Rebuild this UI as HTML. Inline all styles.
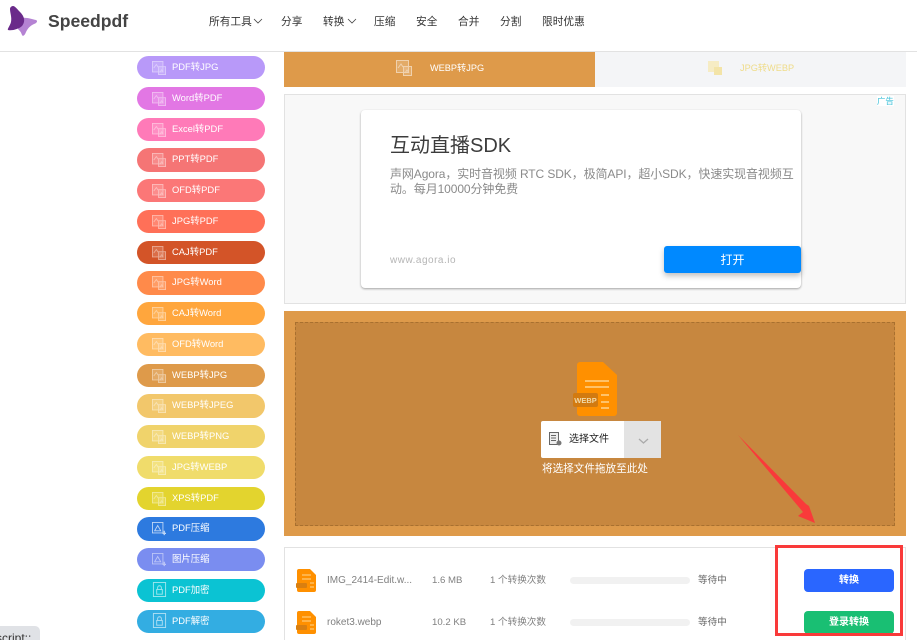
<!DOCTYPE html>
<html><head><meta charset="utf-8">
<style>
*{box-sizing:border-box}
html{margin:0;padding:0;width:917px;height:640px;overflow:hidden;background:#fff}
body{margin:0;padding:0;width:917px;height:640px;overflow:hidden;position:relative;background:#fff;font-family:"Liberation Sans","Noto Sans CJK SC",sans-serif}
.a{position:absolute;white-space:nowrap}
.nav{top:15px;font-size:10.7px;line-height:14px;color:#333}
.p{position:absolute;left:137px;width:128px;height:23px;border-radius:12px;color:#fff;font-size:9.4px;line-height:22px;padding-left:35px}
.p svg{position:absolute;left:15px;top:5px;opacity:.5}
.t{font-size:9.6px;color:#808080;line-height:14px;position:absolute;white-space:nowrap}
.n{font-size:10px}
</style></head><body>
<svg class="a" style="left:7px;top:6px" width="31" height="31" viewBox="0 0 31 31">
<path d="M14 12C19 11 25 13 29 14 31 15 30 17 27 18 23 20 21 22 19 26 18 29 16 31 15 29 14 26 13 25 11 23Z" fill="#b583d3"/>
<path d="M6 0C8 0 10 3 13 6 17 10 19 15 15 20 12 23 5 25 1 24 0 23 3 20 4 16 5 11 3 7 3 3 3 1 5 0 6 0Z" fill="#6a2a8a"/>
</svg>
<div class="a" style="left:48px;top:10px;font-size:17.6px;line-height:22px;font-weight:bold;color:#444">Speedpdf</div>
<div class="a nav" style="left:209px">所有工具</div>
<svg class="a" style="left:253px;top:18px" width="10" height="6"><path d="M1 1l4 4 4-4" fill="none" stroke="#444" stroke-width=".8"/></svg>
<div class="a nav" style="left:281px">分享</div>
<div class="a nav" style="left:323px">转换</div>
<svg class="a" style="left:347px;top:18px" width="10" height="6"><path d="M1 1l4 4 4-4" fill="none" stroke="#444" stroke-width=".8"/></svg>
<div class="a nav" style="left:374px">压缩</div>
<div class="a nav" style="left:416px">安全</div>
<div class="a nav" style="left:458px">合并</div>
<div class="a nav" style="left:500px">分割</div>
<div class="a nav" style="left:542px">限时优惠</div>
<div class="a" style="left:0;top:51px;width:917px;height:1px;background:#e2e2e2"></div>

<svg width="0" height="0" style="position:absolute"><defs>
<g id="ic" fill="rgba(255,255,255,.3)" stroke="#fff" stroke-width="1"><rect x=".5" y=".5" width="12" height="12"/><rect x="7.500" y="6.500" width="8" height="9"/><path d="M2 8l3-4 2 3" fill="none"/><path d="M9 13l2-3 2 3" fill="none"/></g>
<g id="ic2" fill="none" stroke="#fff" stroke-width="1"><rect x=".5" y=".5" width="12" height="12"/><path d="M3 10l3.500-6 3.500 6z"/><path d="M14 10v5M12 13h4" stroke-width="1.500"/></g>
<g id="ic3" fill="none" stroke="#fff" stroke-width="1"><rect x="1.500" y=".5" width="13" height="15"/><rect x="5" y="8" width="6" height="5"/><path d="M6 8V6a2 2 0 0 1 4 0v2"/></g>
</defs></svg>
<div class="p" style="top:56px;background:#b899f9"><svg width="14" height="14" viewBox="0 0 16 16"><use href="#ic"/></svg>PDF转JPG</div>
<div class="p" style="top:87px;background:#e277e4"><svg width="14" height="14" viewBox="0 0 16 16"><use href="#ic"/></svg>Word转PDF</div>
<div class="p" style="top:118px;background:#ff7ab8"><svg width="14" height="14" viewBox="0 0 16 16"><use href="#ic"/></svg>Excel转PDF</div>
<div class="p" style="top:148px;height:24px;background:#f57575"><svg width="14" height="14" viewBox="0 0 16 16"><use href="#ic"/></svg>PPT转PDF</div>
<div class="p" style="top:179px;background:#fb7777"><svg width="14" height="14" viewBox="0 0 16 16"><use href="#ic"/></svg>OFD转PDF</div>
<div class="p" style="top:210px;background:#ff7058"><svg width="14" height="14" viewBox="0 0 16 16"><use href="#ic"/></svg>JPG转PDF</div>
<div class="p" style="top:241px;background:#d35428"><svg width="14" height="14" viewBox="0 0 16 16"><use href="#ic"/></svg>CAJ转PDF</div>
<div class="p" style="top:271px;height:24px;background:#ff8a4a"><svg width="14" height="14" viewBox="0 0 16 16"><use href="#ic"/></svg>JPG转Word</div>
<div class="p" style="top:302px;background:#ffa63d"><svg width="14" height="14" viewBox="0 0 16 16"><use href="#ic"/></svg>CAJ转Word</div>
<div class="p" style="top:333px;background:#ffbb61"><svg width="14" height="14" viewBox="0 0 16 16"><use href="#ic"/></svg>OFD转Word</div>
<div class="p" style="top:364px;background:#de9a4a"><svg width="14" height="14" viewBox="0 0 16 16"><use href="#ic"/></svg>WEBP转JPG</div>
<div class="p" style="top:394px;height:24px;background:#f2c76b"><svg width="14" height="14" viewBox="0 0 16 16"><use href="#ic"/></svg>WEBP转JPEG</div>
<div class="p" style="top:425px;background:#f0d36b"><svg width="14" height="14" viewBox="0 0 16 16"><use href="#ic"/></svg>WEBP转PNG</div>
<div class="p" style="top:456px;background:#f0dc6b"><svg width="14" height="14" viewBox="0 0 16 16"><use href="#ic"/></svg>JPG转WEBP</div>
<div class="p" style="top:487px;background:#e3d42e"><svg width="14" height="14" viewBox="0 0 16 16"><use href="#ic"/></svg>XPS转PDF</div>
<div class="p" style="top:517px;height:24px;background:#2d7adf"><svg style="opacity:.7" width="14" height="14" viewBox="0 0 16 16"><use href="#ic2"/></svg>PDF压缩</div>
<div class="p" style="top:548px;background:#7a8df0"><svg width="14" height="14" viewBox="0 0 16 16"><use href="#ic2"/></svg>图片压缩</div>
<div class="p" style="top:579px;background:#0bc3d3"><svg style="top:3px;opacity:.6" width="15" height="15" viewBox="0 0 16 16"><use href="#ic3"/></svg>PDF加密</div>
<div class="p" style="top:610px;background:#33ade2"><svg style="top:3px;opacity:.6" width="15" height="15" viewBox="0 0 16 16"><use href="#ic3"/></svg>PDF解密</div>

<div class="a" style="left:-10px;top:626px;width:50px;height:20px;background:#e0e2e6;border-radius:5px;font-size:12px;line-height:24px;color:#333;padding-left:6px">script::</div>

<div class="a" style="left:284px;top:52px;width:311px;height:35px;background:#de9a4a"></div>
<svg class="a" style="left:396px;top:60px;opacity:.55" width="16" height="16" viewBox="0 0 16 16"><use href="#ic"/></svg>
<div class="a" style="left:430px;top:61px;font-size:9.2px;line-height:14px;color:#fff">WEBP转JPG</div>
<div class="a" style="left:595px;top:52px;width:311px;height:35px;background:#f4f5f7"></div>
<svg class="a" style="left:708px;top:61px" width="14" height="14"><rect x="0" y="0" width="11" height="11" fill="#f6ecc4"/><rect x="6" y="6" width="8" height="8" fill="#f3e4a8"/></svg>
<div class="a" style="left:740px;top:61px;font-size:9.2px;line-height:14px;color:#efdc8a">JPG转WEBP</div>

<div class="a" style="left:284px;top:94px;width:622px;height:210px;background:#f8f8f8;border:1px solid #e2e2e2"></div>
<div class="a" style="left:877px;top:96px;width:17px;height:10px;background:#fff;font-size:8.4px;line-height:10px;color:#3fc0d8">广告</div>
<div class="a" style="left:361px;top:110px;width:440px;height:178px;background:#fff;border-radius:4px;box-shadow:0 1px 2px rgba(0,0,0,.35)"></div>
<div class="a" style="left:390px;top:133px;font-size:20px;line-height:26px;color:#3c3c3c">互动直播SDK</div>
<div class="a" style="left:390px;top:167px;font-size:12px;line-height:15px;color:#8a8a8a;letter-spacing:-.1px">声网Agora，实时音视频 RTC SDK，极简API，超小SDK，快速实现音视频互</div>
<div class="a" style="left:390px;top:182px;font-size:12px;line-height:15px;color:#8a8a8a;letter-spacing:-.1px">动。每月10000分钟免费</div>
<div class="a" style="left:390px;top:254px;font-size:10px;line-height:14px;color:#b5b5b5;letter-spacing:.5px">www.agora.io</div>
<div class="a" style="left:664px;top:246px;width:137px;height:27px;background:#0089ff;border-radius:3px;color:#fff;font-size:12px;line-height:29px;text-align:center;box-shadow:0 3px 6px rgba(0,0,0,.25)">打开</div>

<div class="a" style="left:284px;top:311px;width:622px;height:225px;background:#de9a4a"></div>
<div class="a" style="left:295px;top:322px;width:600px;height:204px;background:#c7873f;border:1px dashed #a8702f"></div>
<svg class="a" style="left:572px;top:361px" width="46" height="56" viewBox="0 0 46 56">
<path d="M8 1H31L45 14V52a3 3 0 0 1-3 3H8a3 3 0 0 1-3-3V4a3 3 0 0 1 3-3Z" fill="#ff9000"/>
<path d="M13 20H37M13 26H37M29 34H37M29 41H37M29 47H37" stroke="#ffe0a8" stroke-width="1.200"/>
<rect x="1" y="32" width="25" height="14" rx="2" fill="#d27a10"/>
<text x="13.500" y="42" font-size="7.500" font-weight="bold" fill="#f0d8a8" text-anchor="middle" font-family="Liberation Sans">WEBP</text>
</svg>
<div class="a" style="left:541px;top:421px;width:120px;height:37px;background:#fff;border-radius:2px"></div>
<div class="a" style="left:624px;top:421px;width:37px;height:37px;background:#e3e3e3"></div>
<svg class="a" style="left:549px;top:432px" width="13" height="14"><rect x=".5" y=".5" width="9" height="12" fill="#eee" stroke="#666"/><path d="M2 3.500h5M2 6h5M2 8.500h5" stroke="#666"/><circle cx="10" cy="11" r="2.500" fill="#777"/></svg>
<div class="a" style="left:569px;top:432px;font-size:10px;line-height:15px;color:#222">选择文件</div>
<svg class="a" style="left:638px;top:438px" width="11" height="6"><path d="M1 1l4.500 4 4.500-4" fill="none" stroke="#aaa" stroke-width="1.300"/></svg>
<div class="a" style="left:542px;top:462px;font-size:10.6px;line-height:14px;color:#fff">将选择文件拖放至此处</div>

<div class="a" style="left:284px;top:547px;width:622px;height:100px;background:#fff;border:1px solid #e2e2e2"></div>
<svg class="a" style="left:296px;top:569px" width="20" height="23" viewBox="0 0 20 23"><path d="M3 0H14L20 6V21a2 2 0 0 1-2 2H3a2 2 0 0 1-2-2V2a2 2 0 0 1 2-2Z" fill="#ff9000"/><path d="M6 6h9M6 10h9M14 14h4M14 18h4" stroke="#ffd690"/><rect x="0" y="14" width="11" height="5" rx="1" fill="#d97f10"/></svg>
<svg class="a" style="left:296px;top:611px" width="20" height="23" viewBox="0 0 20 23"><path d="M3 0H14L20 6V21a2 2 0 0 1-2 2H3a2 2 0 0 1-2-2V2a2 2 0 0 1 2-2Z" fill="#ff9000"/><path d="M6 6h9M6 10h9M14 14h4M14 18h4" stroke="#ffd690"/><rect x="0" y="14" width="11" height="5" rx="1" fill="#d97f10"/></svg>
<div class="t n" style="left:327px;top:574px">IMG_2414-Edit.w...</div>
<div class="t" style="left:432px;top:574px">1.6 MB</div>
<div class="t" style="left:490px;top:574px">1 个转换次数</div>
<div class="a" style="left:570px;top:577px;width:120px;height:7px;background:#f1f1f1;border-radius:4px"></div>
<div class="t" style="left:698px;top:574px;color:#666">等待中</div>
<div class="t n" style="left:327px;top:616px">roket3.webp</div>
<div class="t" style="left:432px;top:616px">10.2 KB</div>
<div class="t" style="left:490px;top:616px">1 个转换次数</div>
<div class="a" style="left:570px;top:619px;width:120px;height:7px;background:#f1f1f1;border-radius:4px"></div>
<div class="t" style="left:698px;top:616px;color:#666">等待中</div>
<div class="a" style="left:804px;top:569px;width:90px;height:23px;background:#2a66ff;border-radius:4px;color:#fff;font-size:10px;line-height:23px;text-align:center;font-weight:bold">转换</div>
<div class="a" style="left:804px;top:611px;width:90px;height:23px;background:#19bf73;border-radius:4px;color:#fff;font-size:10px;line-height:23px;text-align:center;font-weight:bold">登录转换</div>
<div class="a" style="left:775px;top:545px;width:128px;height:91px;border:3px solid #f93a3a"></div>
<svg class="a" style="left:735px;top:432px" width="85" height="96"><path d="M3 3L71 72 74 74 80 91 63 84 68 80Z" fill="#f93a3a"/></svg>
</body></html>
